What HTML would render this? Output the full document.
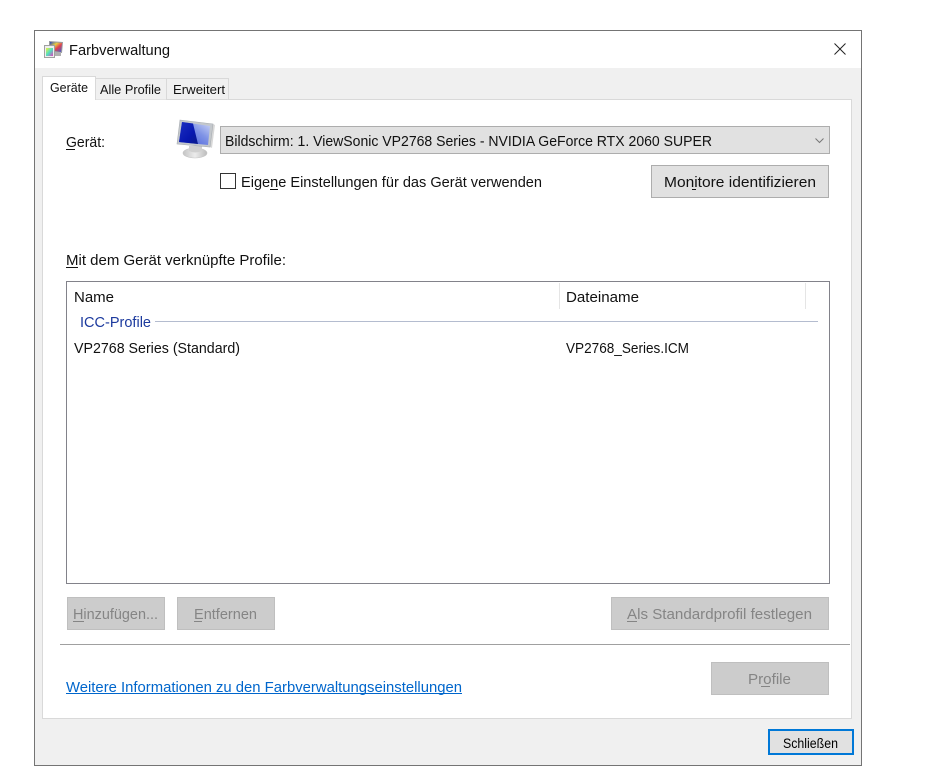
<!DOCTYPE html>
<html lang="de"><head><meta charset="utf-8"><title>Farbverwaltung</title>
<style>
html,body{margin:0;padding:0;background:#fff;width:930px;height:777px;overflow:hidden}
svg{display:block}
text{font-family:"Liberation Sans",sans-serif;font-size:14.5px;fill:#111}
.d{fill:#858585}
</style></head><body>
<svg width="930" height="777" viewBox="0 0 930 777" xmlns="http://www.w3.org/2000/svg">
<defs>
<linearGradient id="dk" x1="0" y1="0" x2="1" y2="1"><stop offset="0" stop-color="#1c2fc0"/><stop offset=".6" stop-color="#0818b0"/><stop offset="1" stop-color="#0a1a8a"/></linearGradient>
<linearGradient id="lt" x1="0" y1="1" x2="1" y2="0"><stop offset="0" stop-color="#3a52d8"/><stop offset=".6" stop-color="#8094e6"/><stop offset="1" stop-color="#cdd6f6"/></linearGradient>
<linearGradient id="st" x1="0" y1="0" x2="1" y2="0"><stop offset="0" stop-color="#c4c4c4"/><stop offset=".5" stop-color="#ececec"/><stop offset="1" stop-color="#bcbcbc"/></linearGradient>
<linearGradient id="rb" x1="0" y1="0" x2="1" y2="1"><stop offset="0" stop-color="#2040c0"/><stop offset=".35" stop-color="#e8d040"/><stop offset=".6" stop-color="#e04050"/><stop offset="1" stop-color="#3060e0"/></linearGradient>
<linearGradient id="rb2" x1="0" y1="0" x2="1" y2="1"><stop offset="0" stop-color="#f0f040"/><stop offset=".5" stop-color="#50e0c0"/><stop offset="1" stop-color="#e040c0"/></linearGradient>
</defs>
<!-- window -->
<rect x="34.5" y="30.5" width="827" height="735" fill="#f0f0f0" stroke="#747474"/>
<rect x="35" y="31" width="826" height="37" fill="#fff"/>
<!-- title icon -->
<path d="M49 41L63 42L62 53L49 51Z" fill="#9a9aa0"/>
<path d="M50 42L62 43L61 52L50 50Z" fill="url(#rb)"/>
<path d="M54 52H61V56H54Z" fill="#b0b0b0"/>
<rect x="44.5" y="45.5" width="10" height="12" fill="#efefef" stroke="#a0a0a0"/>
<rect x="46" y="48" width="7" height="8" fill="url(#rb2)"/>
<text x="69" y="55" textLength="101" lengthAdjust="spacingAndGlyphs">Farbverwaltung</text>
<!-- close -->
<path d="M834.5 43.5L845.5 54.5M845.5 43.5L834.5 54.5" stroke="#222" stroke-width="1" fill="none"/>
<!-- pane -->
<rect x="42.5" y="99.5" width="809" height="619" fill="#fff" stroke="#d9d9d9"/>
<!-- tabs -->
<path d="M94.5 99.5V78.5H166.5V99.5M166.5 78.5H228.5V99.5" fill="#f0f0f0" stroke="#d9d9d9"/>
<path d="M42.5 100V76.5H95.5V100" fill="#fff" stroke="#d9d9d9"/>
<rect x="43" y="98" width="52" height="3" fill="#fff"/>
<text x="50" y="92" style="font-size:13px" textLength="38" lengthAdjust="spacingAndGlyphs">Geräte</text>
<text x="100" y="94" style="font-size:13px" textLength="61" lengthAdjust="spacingAndGlyphs">Alle Profile</text>
<text x="173" y="94" style="font-size:13px" textLength="52" lengthAdjust="spacingAndGlyphs">Erweitert</text>
<!-- Gerät -->
<text x="66" y="147" textLength="39" lengthAdjust="spacingAndGlyphs">Gerät:</text>
<rect x="66" y="149" width="9" height="1" fill="#111"/>
<!-- monitor icon -->
<ellipse cx="195" cy="153" rx="12" ry="5" fill="url(#st)" stroke="#c4c4c4" stroke-width=".6"/>
<path d="M189 146H202V151Q195 154 189 151Z" fill="#d0d0d0"/>
<path d="M213 124L215 125L212 148L210 147Z" fill="#d8d8d8"/>
<path d="M180 120L213 124L210 147L177 144Z" fill="#c4c8cc" stroke="#a8adb2" stroke-width=".6"/>
<path d="M182 122L210 126L208 145L179 142Z" fill="url(#lt)"/>
<path d="M182 122L193 123.500L198 144L179 142Z" fill="url(#dk)"/>
<!-- combo -->
<rect x="220.500" y="126.500" width="609" height="27" fill="#e1e1e1" stroke="#adadad"/>
<text x="225" y="146" textLength="487" lengthAdjust="spacingAndGlyphs">Bildschirm: 1. ViewSonic VP2768 Series - NVIDIA GeForce RTX 2060 SUPER</text>
<path d="M815.500 138.500L819.500 142.500L823.500 138.500" fill="none" stroke="#777" stroke-width="1"/>
<!-- checkbox -->
<rect x="220.500" y="173.500" width="15" height="15" fill="#fff" stroke="#333"/>
<text x="241" y="187" textLength="301" lengthAdjust="spacingAndGlyphs">Eigene Einstellungen für das Gerät verwenden</text>
<rect x="270" y="189" width="8" height="1" fill="#111"/>
<!-- monitor btn -->
<rect x="651.500" y="165.500" width="177" height="32" fill="#e1e1e1" stroke="#adadad"/>
<text x="664" y="187" textLength="152" lengthAdjust="spacingAndGlyphs">Monitore identifizieren</text>
<rect x="692" y="189" width="4" height="1" fill="#111"/>
<!-- label -->
<text x="66" y="265" textLength="220" lengthAdjust="spacingAndGlyphs">Mit dem Gerät verknüpfte Profile:</text>
<rect x="66" y="267" width="12" height="1" fill="#111"/>
<!-- list -->
<rect x="66.500" y="281.500" width="763" height="302" fill="#fff" stroke="#82828a"/>
<rect x="559" y="283" width="1" height="26" fill="#e5e5e5"/>
<rect x="805" y="283" width="1" height="26" fill="#e5e5e5"/>
<text x="74" y="302" textLength="40" lengthAdjust="spacingAndGlyphs">Name</text>
<text x="566" y="302" textLength="73" lengthAdjust="spacingAndGlyphs">Dateiname</text>
<text x="80" y="327" textLength="71" lengthAdjust="spacingAndGlyphs" style="fill:#1c3a9e">ICC-Profile</text>
<rect x="155" y="321" width="663" height="1" fill="#b4bccf"/>
<text x="74" y="353" textLength="166" lengthAdjust="spacingAndGlyphs">VP2768 Series (Standard)</text>
<text x="566" y="353" textLength="123" lengthAdjust="spacingAndGlyphs">VP2768_Series.ICM</text>
<!-- disabled buttons -->
<rect x="67.500" y="597.500" width="97" height="32" fill="#cccccc" stroke="#bfbfbf"/>
<text class="d" x="73" y="619" textLength="85" lengthAdjust="spacingAndGlyphs">Hinzufügen...</text>
<rect x="73" y="621" width="11" height="1" fill="#858585"/>
<rect x="177.500" y="597.500" width="97" height="32" fill="#cccccc" stroke="#bfbfbf"/>
<text class="d" x="194" y="619" textLength="63" lengthAdjust="spacingAndGlyphs">Entfernen</text>
<rect x="194" y="621" width="8" height="1" fill="#858585"/>
<rect x="611.500" y="597.500" width="217" height="32" fill="#cccccc" stroke="#bfbfbf"/>
<text class="d" x="627" y="619" textLength="185" lengthAdjust="spacingAndGlyphs">Als Standardprofil festlegen</text>
<rect x="627" y="621" width="10" height="1" fill="#858585"/>
<rect x="60" y="644" width="790" height="1" fill="#a0a0a0"/>
<rect x="711.500" y="662.500" width="117" height="32" fill="#cccccc" stroke="#bfbfbf"/>
<text class="d" x="748" y="684" textLength="43" lengthAdjust="spacingAndGlyphs">Profile</text>
<rect x="761" y="686" width="9" height="1" fill="#858585"/>
<!-- link -->
<text x="66" y="692" textLength="396" lengthAdjust="spacingAndGlyphs" style="fill:#0066cc">Weitere Informationen zu den Farbverwaltungseinstellungen</text>
<rect x="66" y="693" width="396" height="1" fill="#0066cc"/>
<!-- close btn -->
<rect x="769" y="730" width="84" height="24" fill="#e1e1e1" stroke="#0078d7" stroke-width="2"/>
<text x="783" y="748" style="font-size:13.500px;fill:#000" textLength="55" lengthAdjust="spacingAndGlyphs">Schließen</text>
</svg>
</body></html>
